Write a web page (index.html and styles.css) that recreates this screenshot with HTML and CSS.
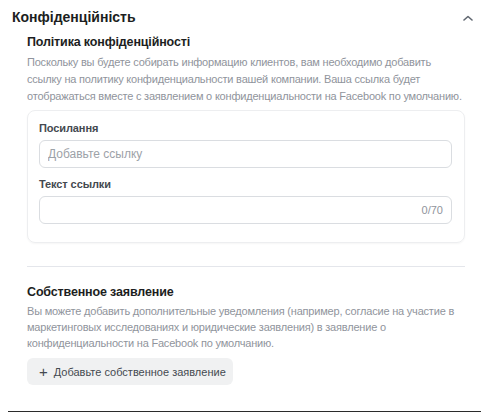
FILE: index.html
```html
<!DOCTYPE html>
<html lang="uk">

<head>
    <meta charset="UTF-8">
    <meta name="viewport" content="width=device-width, initial-scale=1.0">
    <title>Конфіденційність</title>
    <link rel="stylesheet" href="styles.css">
</head>

<body>
    <div class="page">
        <!-- Section header -->
        <div class="section-head">
            <h1 class="section-title">Конфіденційність</h1>
            <svg class="chevron" width="10" height="6" viewBox="0 0 10 6">
                <path d="M1 5 L5 1.5 L9 5" fill="none" stroke="#606770" stroke-width="1.6" stroke-linecap="round" stroke-linejoin="round"/>
            </svg>
        </div>

        <div class="section-body">
            <!-- Privacy policy -->
            <h2 class="block-title">Політика конфіденційності</h2>
            <p class="block-desc">Поскольку вы будете собирать информацию клиентов, вам необходимо добавить<br>ссылку на политику конфиденциальности вашей компании. Ваша ссылка будет<br>отображаться вместе с заявлением о конфиденциальности на Facebook по умолчанию.</p>

            <div class="card">
                <label class="field-label" for="policy_link">Посилання</label>
                <div class="field">
                    <input class="field-input" type="text" id="policy_link" placeholder="Добавьте ссылку">
                </div>

                <label class="field-label" for="link_text">Текст ссылки</label>
                <div class="field">
                    <input class="field-input" type="text" id="link_text">
                    <span class="field-count">0/70</span>
                </div>
            </div>

            <hr class="divider">

            <!-- Custom statement -->
            <h2 class="block-title">Собственное заявление</h2>
            <p class="block-desc tight">Вы можете добавить дополнительные уведомления (например, согласие на участие в<br>маркетинговых исследованиях и юридические заявления) в заявление о<br>конфиденциальности на Facebook по умолчанию.</p>

            <button class="add-button" type="button">
                <span class="plus">+</span>
                Добавьте собственное заявление
            </button>
        </div>

        <div class="bottom-rule"></div>
    </div>
</body>

</html>
```

FILE: styles.css
```css
body {
    margin: 0;
    background-color: #ffffff;
    font-family: "Liberation Sans", Arial, sans-serif;
    color: #1c1e21;
}

.page {
    height: 412px;
    display: flex;
    flex-direction: column;
    box-sizing: border-box;
    padding-top: 8px;
}

.section-head {
    display: flex;
    align-items: center;
    justify-content: space-between;
    padding: 0 27px 0 12px;
}

.section-title {
    margin: 0;
    font-size: 14px;
    line-height: 18px;
    font-weight: bold;
    color: #1c1e21;
}

.chevron {
    margin-top: 1px;
}

.section-body {
    padding: 7px 35px 0 27px;
}

.block-title {
    margin: 0;
    font-size: 12.5px;
    line-height: 18px;
    font-weight: bold;
    letter-spacing: -0.15px;
    color: #1c1e21;
}

.block-desc {
    margin: 3px 0 0;
    font-size: 11px;
    line-height: 17px;
    letter-spacing: -0.2px;
    color: #90949c;
    white-space: nowrap;
}

.block-desc.tight {
    margin-top: 2px;
    line-height: 16px;
}

.card {
    margin-top: 5px;
    border: 1px solid #edeef0;
    border-radius: 8px;
    padding: 9px 12px 18px 11px;
    box-shadow: 0 1px 2px rgba(0, 0, 0, 0.04);
}

.field-label {
    display: block;
    font-size: 11px;
    line-height: 16px;
    font-weight: bold;
    letter-spacing: -0.1px;
    color: #444950;
    margin-bottom: 4px;
}

.field {
    position: relative;
    margin-bottom: 8px;
}

.field:last-child {
    margin-bottom: 0;
}

.field-input {
    display: block;
    width: 100%;
    height: 28px;
    box-sizing: border-box;
    border: 1px solid #dadde1;
    border-radius: 6px;
    padding: 0 8px;
    font-family: inherit;
    font-size: 12px;
    color: #1c1e21;
    background-color: #ffffff;
}

.field-input::placeholder {
    color: #9da2a8;
}

.field-count {
    position: absolute;
    right: 9px;
    top: 7px;
    font-size: 11px;
    line-height: 14px;
    color: #90949c;
}

.divider {
    margin: 23px 0 16px;
    border: none;
    border-top: 1px solid #e4e6eb;
}

.add-button {
    margin-top: 7px;
    display: flex;
    align-items: center;
    gap: 6px;
    width: 206px;
    height: 27px;
    padding: 0 12px;
    border: none;
    border-radius: 6px;
    background-color: #f0f1f2;
    font-family: inherit;
    font-size: 11px;
    color: #444950;
    white-space: nowrap;
    cursor: pointer;
}

.plus {
    font-size: 15px;
    line-height: 16px;
    color: #444950;
}

.bottom-rule {
    margin: auto 19px 0 8px;
    height: 1px;
    background-color: #2b2b2b;
}
```
